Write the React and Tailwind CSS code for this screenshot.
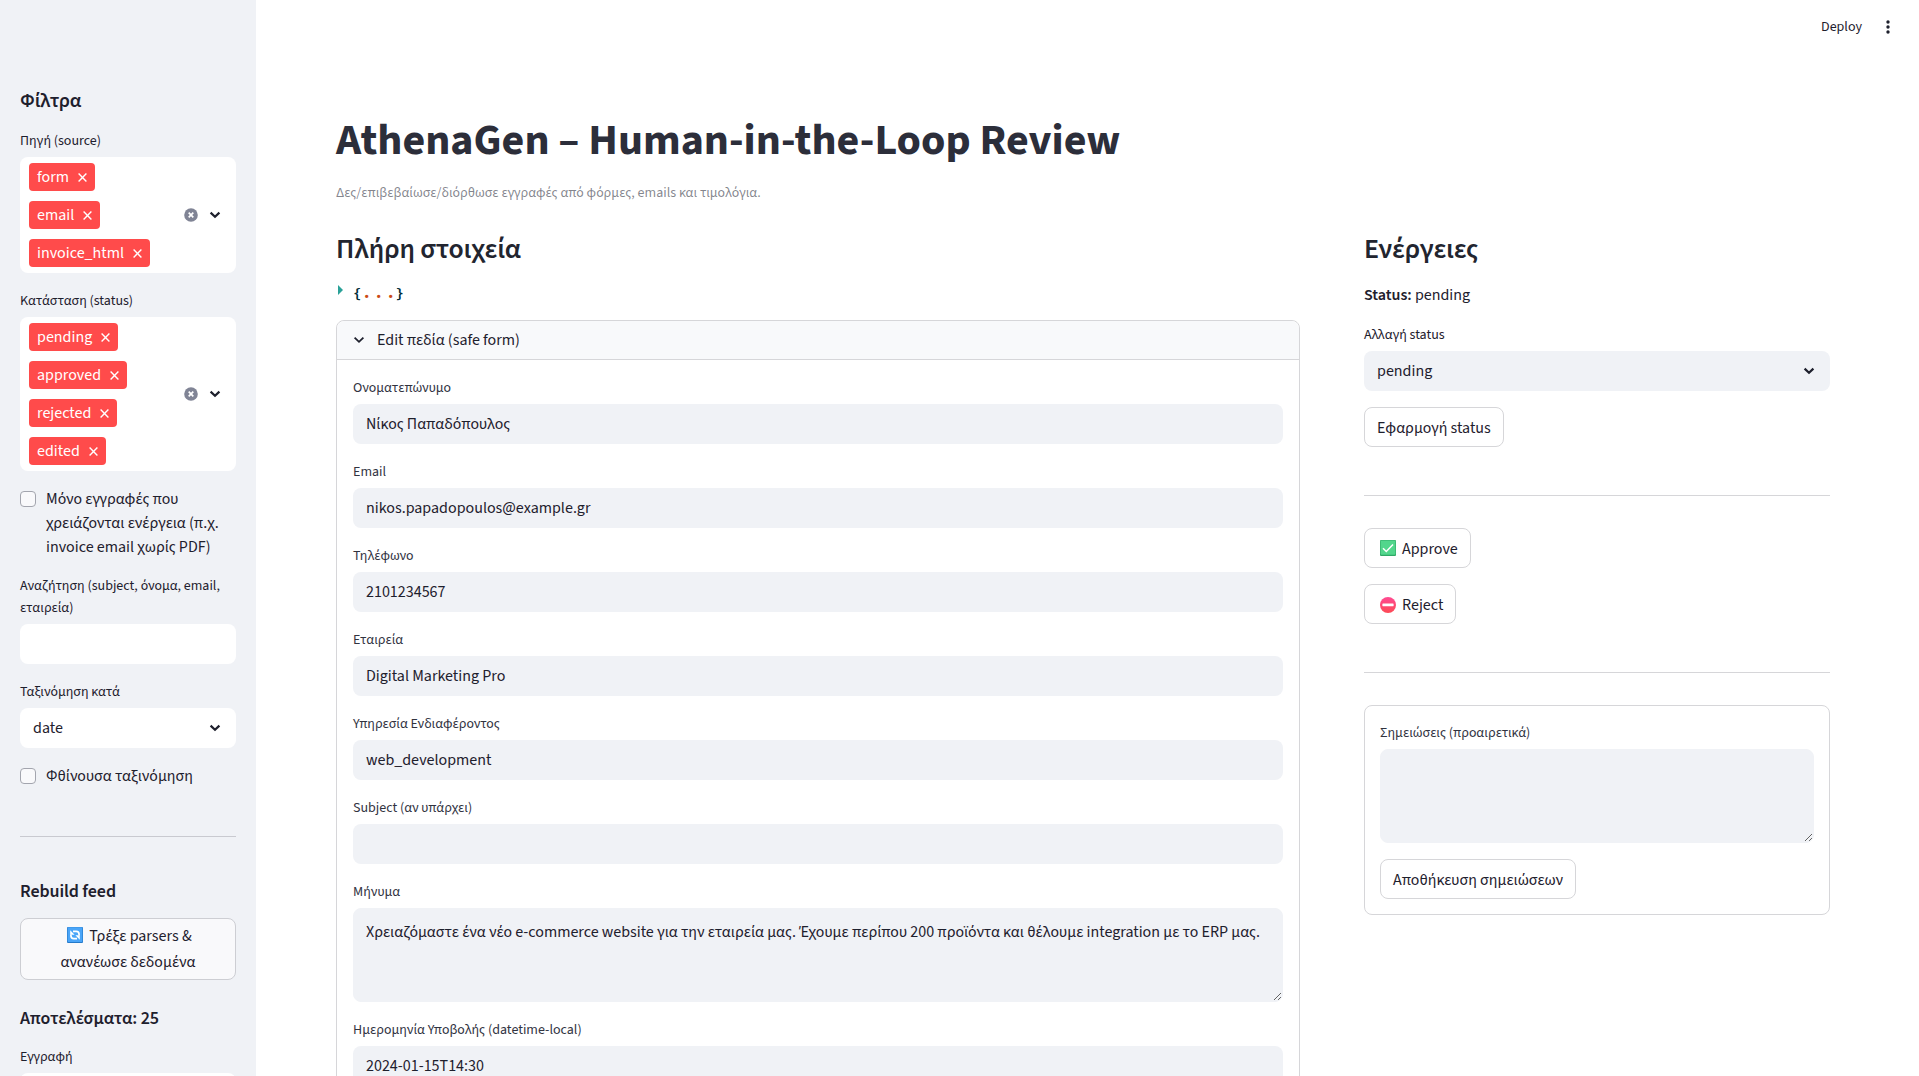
import React from "react";

const LABEL = "text-sm leading-[22.4px]";

function Chevron({ className = "", width = 2.2 }) {
  return (
    <svg viewBox="0 0 12 8" className={`h-2 w-3 shrink-0 ${className}`} fill="none" stroke="#1e202d" strokeWidth={width}>
      <path d="M1.6 1.6 6 5.8 10.4 1.6" />
    </svg>
  );
}

function ClearIcon() {
  return (
    <svg viewBox="0 0 14 14" className="h-3.5 w-3.5 shrink-0">
      <circle cx="7" cy="7" r="6.8" fill="#808495" />
      <path d="M4.7 4.7 9.3 9.3M9.3 4.7 4.7 9.3" stroke="#fff" strokeWidth="1.7" />
    </svg>
  );
}

function Tag({ children }) {
  return (
    <span className="flex h-7 items-center gap-[9px] rounded bg-[#ff4b4b] pr-2 pl-2 text-base leading-6 text-white">
      {children}
      <svg viewBox="0 0 9 9" className="h-[9px] w-[9px]" stroke="#fff" strokeWidth="1.4">
        <path d="M.6.6 8.4 8.4M8.4.6.6 8.4" />
      </svg>
    </span>
  );
}

function MultiSelect({ label, items }) {
  return (
    <div className="flex flex-col gap-1">
      <div className={`flex h-6 items-center ${LABEL}`}>{label}</div>
      <div className="flex items-center rounded-lg bg-white py-1.5 pr-[15px] pl-[9px]">
        <div className="flex flex-1 flex-col items-start gap-2.5">
          {items.map((i) => (
            <Tag key={i}>{i}</Tag>
          ))}
        </div>
        <ClearIcon />
        <Chevron className="ml-[11px]" />
      </div>
    </div>
  );
}

function Select({ label, value, className }) {
  return (
    <div className="flex flex-col gap-1">
      <div className={`flex h-6 items-center ${LABEL}`}>{label}</div>
      <div className={`flex h-10 items-center justify-between rounded-lg pr-[15px] pl-[13px] ${className}`}>
        <span>{value}</span>
        <Chevron />
      </div>
    </div>
  );
}

function Checkbox({ children }) {
  return (
    <label className="flex items-start gap-[10px] leading-6">
      <span className="mt-1 h-4 w-4 shrink-0 rounded border border-[#a3a5ae] bg-[#f9f9fb]" />
      <span>{children}</span>
    </label>
  );
}

function Field({ label, value }) {
  return (
    <div className="flex flex-col gap-1">
      <div className={`flex h-6 items-center text-[#31333f] ${LABEL}`}>{label}</div>
      <div className="flex h-10 items-center rounded-lg bg-[#f0f2f6] px-[13px]">{value}</div>
    </div>
  );
}

function Area({ label, value }) {
  return (
    <div className="flex flex-col gap-1">
      <div className={`flex h-6 items-center text-[#31333f] ${LABEL}`}>{label}</div>
      <div className="flex h-[94px] overflow-hidden rounded-lg border border-[#f0f2f6] bg-[#f0f2f6]">
        <textarea className="h-full w-full resize-y px-3 py-[11px] leading-6 outline-none" defaultValue={value} />
      </div>
    </div>
  );
}

function Button({ children }) {
  return (
    <button className="flex h-10 items-center rounded-lg border border-[#d6d6d9] bg-white px-3 pt-0.5">{children}</button>
  );
}

function CheckEmoji() {
  return (
    <svg viewBox="0 0 16 16" className="mr-1.5 mb-0.5 ml-[3px] h-4 w-4">
      <rect width="16" height="16" rx="1" fill="#2fa866" />
      <rect x="0.6" y="0.4" width="14.8" height="14.4" rx="0.8" fill="#52d68c" />
      <path d="M3 8.2 6.3 11.5 13 4.6" fill="none" stroke="#fff" strokeWidth="1.5" />
    </svg>
  );
}

function NoEntryEmoji() {
  return (
    <svg viewBox="0 0 16 16" className="mr-1.5 ml-[3px] h-4 w-4">
      <defs>
        <linearGradient id="stop" x1="0" y1="0" x2="0" y2="1">
          <stop offset="0" stopColor="#ff4a92" />
          <stop offset="1" stopColor="#fd4a55" />
        </linearGradient>
      </defs>
      <circle cx="8" cy="8" r="8" fill="url(#stop)" />
      <rect x="2.4" y="6.6" width="11.2" height="2.6" rx="0.4" fill="#fff" />
    </svg>
  );
}

function RefreshEmoji() {
  return (
    <svg viewBox="0 0 16 16" className="mr-1.5 mb-1 ml-[3px] inline-block h-4 w-4 align-middle">
      <rect width="16" height="16" rx="1" fill="#2479c9" />
      <rect x="0.6" y="0.3" width="14.8" height="14.8" rx="0.8" fill="#4aa5f8" />
      <g fill="none" stroke="#fff" strokeWidth="1.7">
        <path d="M6 4.4h3.2c1.9 0 2.9 1.2 2.9 3.2v.9" />
        <path d="M10 11.6H6.8c-1.9 0-2.9-1.2-2.9-3.2v-.9" />
      </g>
      <path d="M3.2 3.2v4.6h4.4zM12.8 12.8V8.2H8.4z" fill="#fff" />
    </svg>
  );
}

function Sidebar() {
  return (
    <aside className="flex w-64 shrink-0 flex-col bg-[#f0f2f6] px-5 pt-[89px]">
      <h2 className="mb-4 text-xl leading-6 font-semibold tracking-[-0.1px]">Φίλτρα</h2>
      <div className="flex flex-col gap-4">
        <MultiSelect label="Πηγή (source)" items={["form", "email", "invoice_html"]} />
        <MultiSelect label="Κατάσταση (status)" items={["pending", "approved", "rejected", "edited"]} />
        <Checkbox>Μόνο εγγραφές που χρειάζονται ενέργεια (π.χ. invoice email χωρίς PDF)</Checkbox>
        <div className="flex flex-col gap-1">
          <div className={`h-[45px] ${LABEL}`}>Αναζήτηση (subject, όνομα, email, εταιρεία)</div>
          <div className="h-10 rounded-lg bg-white" />
        </div>
        <Select label="Ταξινόμηση κατά" value="date" className="bg-white" />
        <Checkbox>Φθίνουσα ταξινόμηση</Checkbox>
      </div>
      <hr className="mt-12 border-[#c9cad0]" />
      <h3 className="mt-11 mb-[15px] text-lg leading-[22px] font-semibold tracking-[-0.09px]">Rebuild feed</h3>
      <button className="h-[62px] shrink-0 rounded-lg border border-[#cdced3] bg-[#f9f9fb] px-3 leading-[26px]">
        <RefreshEmoji />
        Τρέξε parsers &amp; ανανέωσε δεδομένα
      </button>
      <h3 className="mt-7 mb-[15px] text-lg leading-[22px] font-semibold tracking-[-0.09px]">Αποτελέσματα: 25</h3>
      <Select label="Εγγραφή" value="" className="bg-white" />
    </aside>
  );
}

export default function App() {
  return (
    <div className="flex h-[1076px] w-full overflow-hidden bg-white font-['Source_Sans_3','Source_Sans_Pro','Noto_Sans',sans-serif] text-base text-[#1e202d]">
      <Sidebar />
      <div className="flex flex-1 flex-col">
        <header className="flex h-[60px] shrink-0 items-start justify-end gap-6 pt-[15px] pr-[29px]">
          <span className="text-sm leading-6">Deploy</span>
          <svg viewBox="0 0 4 14" className="mt-[5px] h-3.5 w-1" fill="#1e202d">
            <circle cx="2" cy="2" r="1.7" />
            <circle cx="2" cy="7" r="1.7" />
            <circle cx="2" cy="12" r="1.7" />
          </svg>
        </header>
        <main className="flex flex-col pr-[89px] pl-20">
          <h1 className="mt-[54px] text-[44px] leading-[53px] font-bold text-[#2c2e3a]">
            AthenaGen – Human-in-the-Loop Review
          </h1>
          <p className="mt-[15px] text-sm leading-[22px] text-[#31333f]/60">
            Δες/επιβεβαίωσε/διόρθωσε εγγραφές από φόρμες, emails και τιμολόγια.
          </p>
          <div className="mt-7 flex gap-16">
            <section className="w-[964px] shrink-0">
              <h2 className="text-[28px] leading-[34px] font-semibold tracking-[-0.14px] text-[#22252f]">Πλήρη στοιχεία</h2>
              <div className="mt-[15px] flex h-6 items-start font-['Source_Code_Pro','Liberation_Mono',monospace] text-sm leading-6 font-bold">
                <svg viewBox="0 0 5 10" className="mt-1 ml-0.5 h-2.5 w-[5px]" fill="#2aa198">
                  <path d="M0 0 5 5 0 10z" />
                </svg>
                <span className="ml-[10px] text-[#002b36]">{"{"}</span>
                <span className="ml-px tracking-[3.6px] text-[#cb4b16]">...</span>
                <span className="-ml-[3px] text-[#002b36]">{"}"}</span>
              </div>
              <div className="mt-[15px] rounded-t-lg border border-[#d6d6d9]">
                <div className="flex h-[39px] items-center rounded-t-lg border-b border-[#d6d6d9] bg-[#f8f9fb] pl-4">
                  <Chevron width={1.8} />
                  <span className="ml-3">Edit πεδία (safe form)</span>
                </div>
                <div className="flex flex-col gap-4 p-4">
                  <Field label="Ονοματεπώνυμο" value="Νίκος Παπαδόπουλος" />
                  <Field label="Email" value="nikos.papadopoulos@example.gr" />
                  <Field label="Τηλέφωνο" value="2101234567" />
                  <Field label="Εταιρεία" value="Digital Marketing Pro" />
                  <Field label="Υπηρεσία Ενδιαφέροντος" value="web_development" />
                  <Field label="Subject (αν υπάρχει)" value="" />
                  <Area
                    label="Μήνυμα"
                    value="Χρειαζόμαστε ένα νέο e-commerce website για την εταιρεία μας. Έχουμε περίπου 200 προϊόντα και θέλουμε integration με το ERP μας."
                  />
                  <Field label="Ημερομηνία Υποβολής (datetime-local)" value="2024-01-15T14:30" />
                </div>
              </div>
            </section>
            <section className="flex flex-1 flex-col items-stretch">
              <h2 className="text-[28px] leading-[34px] font-semibold tracking-[-0.14px] text-[#22252f]">Ενέργειες</h2>
              <p className="mt-[17px] mb-[15px] leading-[25px]">
                <b className="font-semibold">Status:</b> pending
              </p>
              <Select label="Αλλαγή status" value="pending" className="bg-[#f0f2f6]" />
              <div className="mt-4 flex">
                <Button>Εφαρμογή status</Button>
              </div>
              <hr className="mt-12 mb-8 border-[#d6d6d9]" />
              <div className="flex flex-col items-start gap-4">
                <Button>
                  <CheckEmoji />
                  Approve
                </Button>
                <Button>
                  <NoEntryEmoji />
                  Reject
                </Button>
              </div>
              <hr className="mt-12 mb-8 border-[#d6d6d9]" />
              <div className="flex flex-col items-stretch gap-4 rounded-lg border border-[#d6d6d9] p-[15px]">
                <Area label="Σημειώσεις (προαιρετικά)" value="" />
                <div className="flex">
                  <Button>Αποθήκευση σημειώσεων</Button>
                </div>
              </div>
            </section>
          </div>
        </main>
      </div>
    </div>
  );
}
